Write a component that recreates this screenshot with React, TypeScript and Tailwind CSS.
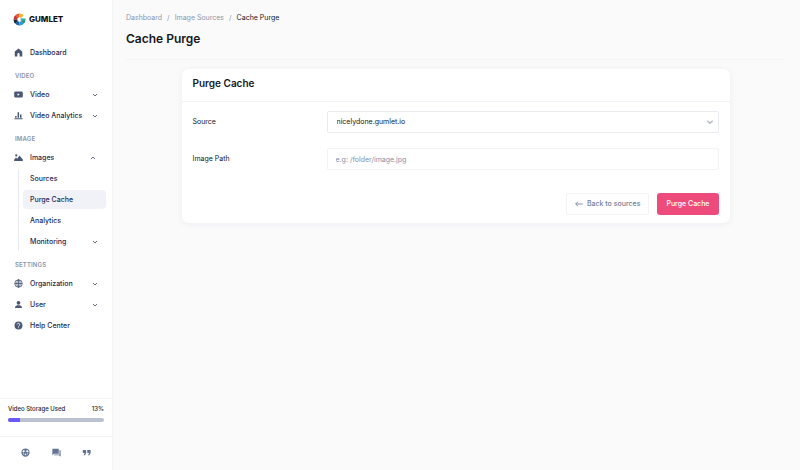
import type { ReactNode } from "react";

function Icon({ children, className = "size-[9px]" }: { children: ReactNode; className?: string }) {
  return (
    <svg viewBox="0 0 24 24" fill="currentColor" aria-hidden="true" className={`shrink-0 ${className}`}>
      {children}
    </svg>
  );
}

const icons = {
  home: <path d="M12 1.500 2 9v13.500h7v-6a3 3 0 0 1 6 0v6h7V9z" />,
  video: (
    <path
      fillRule="evenodd"
      d="M4 4h16a3.500 3.500 0 0 1 3.500 3.500v9A3.500 3.500 0 0 1 20 20H4a3.500 3.500 0 0 1-3.500-3.500v-9A3.500 3.500 0 0 1 4 4zM9.500 8.500v7l6-3.500z"
    />
  ),
  chart: <path d="M1 19.500h22V22H1zM3 13h4v5H3zM9.500 3h4v15h-4zM16 9h4v9h-4z" />,
  images: (
    <path
      fillRule="evenodd"
      d="M.500 21v-4l5-5 3 3 6-8.500 9 10.500v4zM6 3.500a3 3 0 1 1 0 6 3 3 0 0 1 0-6z"
    />
  ),
  globe: (
    <g fill="none" stroke="currentColor" strokeWidth="2.200">
      <circle cx="12" cy="12" r="10" />
      <ellipse cx="12" cy="12" rx="4.500" ry="10" />
      <path d="M2 12h20M12 2v20" />
    </g>
  ),
  user: <path d="M12 2.500a5 5 0 1 1 0 10 5 5 0 0 1 0-10zM3 21v-2.500c0-3 5-4.500 9-4.500s9 1.500 9 4.500V21z" />,
  help: (
    <>
      <circle cx="12" cy="12" r="10.500" />
      <path
        d="M8.500 9.500a3.500 3.500 0 1 1 5.500 2.800c-1.400 1-2 1.500-2 2.700M12 17v2.200"
        fill="none"
        stroke="#fff"
        strokeWidth="2.200"
      />
    </>
  ),
};

function Chevron({ up = false, className = "size-[6px]" }: { up?: boolean; className?: string }) {
  return (
    <svg
      viewBox="0 0 12 12"
      fill="none"
      stroke="currentColor"
      strokeWidth="2"
      aria-hidden="true"
      className={`shrink-0 ${className}`}
    >
      <path d={up ? "M2 8l4-4 4 4" : "M2 4l4 4 4-4"} />
    </svg>
  );
}

type ItemProps = { label: string; icon?: ReactNode; menu?: "open" | "closed"; active?: boolean };

const rowClass =
  "flex h-[19px] w-full items-center rounded-[4px] pl-[7px] text-left text-[7px] font-medium text-[#1f2a4d]";

function Item({ label, icon, menu, active = false }: ItemProps) {
  const content = (
    <>
      {icon && (
        <span className="flex w-[16px] text-[#4a5775]">
          <Icon>{icon}</Icon>
        </span>
      )}
      <span className="flex-1 whitespace-nowrap">{label}</span>
      {menu && (
        <span className={menu === "open" ? "pr-[10px] text-[#5f6b86]" : "pr-[8px] text-[#5f6b86]"}>
          <Chevron up={menu === "open"} />
        </span>
      )}
    </>
  );
  return (
    <li>
      {menu ? (
        <button type="button" aria-expanded={menu === "open"} className={rowClass}>
          {content}
        </button>
      ) : (
        <a href="#" className={`${rowClass} ${active ? "bg-[#f1f2f7]" : ""}`}>
          {content}
        </a>
      )}
    </li>
  );
}

function Section({ title, children }: { title: string; children: ReactNode }) {
  return (
    <section>
      <h2 className="px-[8px] pt-[9px] pb-[4px] text-[6px] leading-[10px] font-semibold tracking-wide text-[#8a94a9]">
        {title}
      </h2>
      <ul className="flex flex-col gap-[2px]">{children}</ul>
    </section>
  );
}

function Logo() {
  const arcs = [
    ["#ef5a34", "M6.500 6.500A7.500 7.500 0 0 1 12 4.500"],
    ["#f6b52c", "M12 4.500A7.500 7.500 0 0 1 17.500 6.500"],
    ["#c7372f", "M4.500 12A7.500 7.500 0 0 1 6.500 6.500"],
    ["#1f2937", "M6.500 17.500A7.500 7.500 0 0 1 4.500 12"],
    ["#1d5fa8", "M12 19.500A7.500 7.500 0 0 1 6.500 17.500"],
    ["#2a9bd6", "M17.500 17.500A7.500 7.500 0 0 1 12 19.500"],
    ["#2f8f86", "M19.500 12A7.500 7.500 0 0 1 17.500 17.500"],
  ];
  return (
    <a href="#" className="flex items-center gap-[3px] text-[8px] font-extrabold text-[#111]">
      <svg viewBox="0 0 24 24" aria-hidden="true" className="size-[13px]" fill="none" strokeWidth="7">
        {arcs.map(([color, d]) => (
          <path key={color} d={d} stroke={color} />
        ))}
        <path d="M14 12h9" stroke="#35b0a0" strokeWidth="4" />
      </svg>
      GUMLET
    </a>
  );
}

function Sidebar() {
  return (
    <aside className="flex w-[113px] shrink-0 flex-col border-r border-[#f3f4f6] bg-white">
      <div className="px-[13px] pt-[12px] pb-[10px]">
        <div className="flex h-[14px] items-center">
          <Logo />
        </div>
      </div>
      <nav className="flex-1 pt-[7px] pr-[6px] pl-[7px]">
        <ul>
          <Item label="Dashboard" icon={icons.home} />
        </ul>
        <Section title="VIDEO">
          <Item label="Video" icon={icons.video} menu="closed" />
          <Item label="Video Analytics" icon={icons.chart} menu="closed" />
        </Section>
        <Section title="IMAGE">
          <Item label="Images" icon={icons.images} menu="open" />
          <li className="ml-[11px] border-l border-[#e6e8f5] pl-[4px]">
            <ul className="flex flex-col gap-[2px]">
              <Item label="Sources" />
              <Item label="Purge Cache" active />
              <Item label="Analytics" />
              <Item label="Monitoring" menu="closed" />
            </ul>
          </li>
        </Section>
        <Section title="SETTINGS">
          <Item label="Organization" icon={icons.globe} menu="closed" />
          <Item label="User" icon={icons.user} menu="closed" />
          <Item label="Help Center" icon={icons.help} />
        </Section>
      </nav>
      <div className="border-t border-[#f3f4f6] px-[8px] pt-[5px] pb-[14px] text-[6px] leading-[10px] font-medium text-[#20242e]">
        <div className="flex justify-between pb-[4px]">
          <span id="storage">Video Storage Used</span>
          <span>13%</span>
        </div>
        <div
          role="progressbar"
          aria-labelledby="storage"
          aria-valuenow={13}
          className="h-[4px] overflow-hidden rounded-full bg-[#bac2d1]"
        >
          <div className="h-full w-[13%] bg-[#6a58f5]" />
        </div>
      </div>
      <div className="flex h-[34px] items-center justify-between border-t border-[#f3f4f6] px-[21px] pb-[3px] text-[#647594]">
        <a href="#" aria-label="Support">
          <Icon>
            <path
              fillRule="evenodd"
              d="M12 1a11 11 0 1 1 0 22 11 11 0 0 1 0-22zM7 5.500l4 2.500-4 4-3.500-2zM17 5.500 13 8l4 4 3.500-2zM5 14l3 .500.500 4.500zM19 14l-3 .500-.500 4.500zM10 15.500h4l-1 4h-2z"
            />
          </Icon>
        </a>
        <a href="#" aria-label="Chat">
          <Icon>
            <path d="M1 2h17v13H5l-4 4zM20 6h3v17l-4-4H6v-2h14z" />
          </Icon>
        </a>
        <a href="#" aria-label="Feedback">
          <Icon>
            <path d="M2 5h9v8l-3 6H4l3-6H2zM14 5h9v8l-3 6h-4l3-6h-5z" />
          </Icon>
        </a>
      </div>
    </aside>
  );
}

export default function App() {
  return (
    <div className="flex min-h-screen bg-[#fafafb] font-['Inter',sans-serif] text-[7px] leading-[10px] text-[#16181d]">
      <Sidebar />
      <main className="flex-1 pt-[13px] pr-[15px] pl-[13px]">
        <nav aria-label="Breadcrumb">
          <ol className="flex gap-[5px] text-[#8d96a9]">
            <li><a href="#">Dashboard</a></li>
            <li aria-hidden="true">/</li>
            <li><a href="#">Image Sources</a></li>
            <li aria-hidden="true">/</li>
            <li aria-current="page" className="text-[#16181d]">Cache Purge</li>
          </ol>
        </nav>
        <h1 className="border-b border-[#f3f4f6] pt-[8px] pb-[12px] text-[12px] leading-4 font-semibold">
          Cache Purge
        </h1>
        <form
          onSubmit={(e) => e.preventDefault()}
          className="mx-auto mt-[9px] w-full max-w-[548px] rounded-[6px] bg-white shadow-[0_1px_6px_rgba(30,40,80,0.06)]"
        >
          <h2 className="border-b border-[#f3f4f6] px-[11px] pt-[7px] pb-[11px] text-[10px] leading-[14px] font-semibold">
            Purge Cache
          </h2>
          <div className="px-[11px] pt-[9px] pb-[8px]">
            <div className="grid grid-cols-[134px_1fr] items-center gap-y-[15px]">
              <label htmlFor="source">Source</label>
              <div className="relative">
                <select
                  id="source"
                  className="h-[22px] w-full appearance-none rounded-[2px] border border-[#e9ebf0] bg-white px-[9px] text-[7px]"
                >
                  <option>nicelydone.gumlet.io</option>
                </select>
                <span className="pointer-events-none absolute inset-y-0 right-[5px] flex items-center text-[#b4b9c4]">
                  <Chevron className="size-[8px]" />
                </span>
              </div>
              <label htmlFor="path">Image Path</label>
              <input
                id="path"
                type="text"
                placeholder="e.g: /folder/image.jpg"
                className="h-[22px] w-full rounded-[2px] border border-[#f2f3f5] bg-white px-[8px] text-[7px] placeholder:text-[#8490a8]"
              />
            </div>
            <div className="flex justify-end gap-[8px] pt-[23px] font-medium">
              <button
                type="button"
                className="flex h-[22px] items-center gap-[4px] rounded-[2px] border border-[#f2f3f6] px-[8px] text-[#6f7c96]"
              >
                <svg viewBox="0 0 24 24" fill="none" stroke="currentColor" strokeWidth="2.500" aria-hidden="true" className="size-[8px]">
                  <path d="M23 12H2M9 5l-7 7 7 7" />
                </svg>
                Back to sources
              </button>
              <button type="submit" className="h-[22px] rounded-[3px] bg-[#ed4b7b] px-[9px] text-white">
                Purge Cache
              </button>
            </div>
          </div>
        </form>
      </main>
    </div>
  );
}
